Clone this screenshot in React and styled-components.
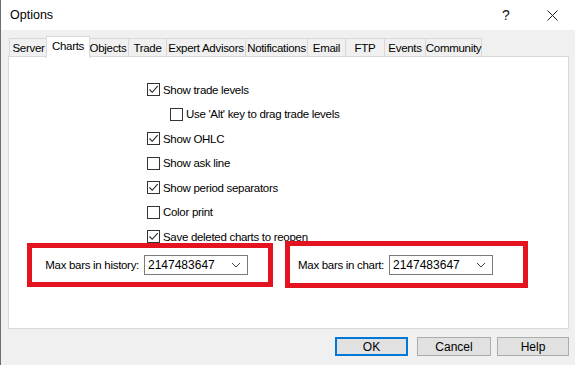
import React from 'react';
import styled, { createGlobalStyle } from 'styled-components';

const GlobalStyle = createGlobalStyle`
  html, body {
    margin: 0;
    padding: 0;
    background: #f0f0f0;
  }
  body {
    font-family: "Liberation Sans", Arial, sans-serif;
    font-size: 11.5px;
    letter-spacing: -0.3px;
    color: #000;
  }
`;

const Window = styled.div`
  width: 575px;
  height: 365px;
  box-sizing: border-box;
  border-left: 1px solid #6e6e6e;
  background: #f0f0f0;
  display: flex;
  flex-direction: column;
  overflow: hidden;
`;

const TitleBar = styled.div`
  height: 30px;
  background: #fff;
  display: flex;
  align-items: center;
  padding-left: 9px;
  font-size: 12.5px;
  letter-spacing: 0;
`;

const Title = styled.div`
  flex: 1;
`;

const TitleButton = styled.div`
  width: 46px;
  height: 30px;
  display: flex;
  align-items: center;
  justify-content: center;
  font-size: 14px;
  color: #111;
`;

const Body = styled.div`
  padding: 6px 6px 0 7px;
  display: flex;
  flex-direction: column;
`;

const TabRow = styled.div`
  display: flex;
  align-items: flex-end;
  height: 21px;
  padding-left: 2px;
  position: relative;
  z-index: 1;
`;

const Tab = styled.div`
  box-sizing: border-box;
  width: ${p => p.$w}px;
  height: ${p => (p.$active ? 22 : 19)}px;
  margin-bottom: ${p => (p.$active ? '-1px' : '0')};
  margin-right: ${p => (p.$active ? '-2px' : '0')};
  margin-left: ${p => (p.$active ? '-2px' : '-1px')};
  background: ${p => (p.$active ? '#fff' : '#f0f0f0')};
  border: 1px solid #d9d9d9;
  border-bottom: ${p => (p.$active ? 'none' : '1px solid #d9d9d9')};
  display: flex;
  justify-content: center;
  align-items: ${p => (p.$active ? 'flex-start' : 'center')};
  padding-top: ${p => (p.$active ? '3px' : '0')};
  white-space: nowrap;
  position: relative;
  z-index: ${p => (p.$active ? 2 : 1)};
`;

const Panel = styled.div`
  height: 273px;
  box-sizing: border-box;
  background: #fff;
  border: 1px solid #d9d9d9;
  margin-top: -1px;
  display: flex;
  flex-direction: column;
`;

const CheckList = styled.div`
  display: flex;
  flex-direction: column;
  padding: 26px 0 0 138px;
  gap: 11.5px;
`;

const CheckRow = styled.label`
  display: flex;
  align-items: center;
  gap: 3px;
  height: 13px;
  padding-left: ${p => (p.$indent ? 23 : 0)}px;
  white-space: nowrap;
`;

const Box = styled.span`
  width: 13px;
  height: 13px;
  flex-shrink: 0;
  box-sizing: border-box;
  border: 1px solid #333;
  background: #fff;
  display: flex;
  align-items: center;
  justify-content: center;
`;

const FieldRow = styled.div`
  display: flex;
  margin-top: 0;
  padding-left: 18px;
  gap: 12px;
`;

const Highlight = styled.div`
  width: ${p => p.$w}px;
  height: ${p => p.$h}px;
  box-sizing: border-box;
  border: 5px solid #e3141f;
  margin-top: ${p => p.$top}px;
  display: flex;
  align-items: center;
  justify-content: flex-end;
  padding-right: ${p => p.$pr}px;
  gap: 5px;
  white-space: nowrap;
`;

const Combo = styled.div`
  width: 104px;
  height: 20px;
  flex-shrink: 0;
  box-sizing: border-box;
  border: 1px solid #7a7a7a;
  background: #fff;
  display: flex;
  align-items: center;
  justify-content: space-between;
  padding: 0 6px 0 3px;
  font-size: 12px;
  letter-spacing: 0;
`;

const Buttons = styled.div`
  display: flex;
  justify-content: flex-end;
  padding: 8px 0 0 0;
`;

const Button = styled.div`
  width: ${p => p.$w}px;
  height: 19px;
  margin-right: ${p => p.$mr || 0}px;
  box-sizing: border-box;
  background: #e1e1e1;
  border: ${p => (p.$default ? '2px solid #0078d7' : '1px solid #adadad')};
  display: flex;
  align-items: center;
  justify-content: center;
  font-size: 12px;
  letter-spacing: 0;
`;

const Check = () => (
  <svg width="11" height="11" viewBox="0 0 11 11">
    <path d="M1.5 5.5 L4.2 8.3 L9.7 2.2" fill="none" stroke="#222" strokeWidth="1.1" />
  </svg>
);

const Chevron = () => (
  <svg width="10" height="6" viewBox="0 0 10 6">
    <path d="M1 1 L5 5 L9 1" fill="none" stroke="#444" strokeWidth="1" />
  </svg>
);

const tabs = [
  ['Server', 39],
  ['Charts', 44, true],
  ['Objects', 42],
  ['Trade', 39],
  ['Expert Advisors', 80],
  ['Notifications', 63],
  ['Email', 39],
  ['FTP', 40],
  ['Events', 42],
  ['Community', 57],
];

const options = [
  ['Show trade levels', true],
  ["Use 'Alt' key to drag trade levels", false, true],
  ['Show OHLC', true],
  ['Show ask line', false],
  ['Show period separators', true],
  ['Color print', false],
  ['Save deleted charts to reopen', true],
];

export default function App() {
  return (
    <>
      <GlobalStyle />
      <Window>
        <TitleBar>
          <Title>Options</Title>
          <TitleButton>?</TitleButton>
          <TitleButton>
            <svg width="11" height="11" viewBox="0 0 11 11">
              <path d="M0.5 0.5 L10.5 10.5 M10.5 0.5 L0.5 10.5" stroke="#222" strokeWidth="1" />
            </svg>
          </TitleButton>
        </TitleBar>
        <Body>
          <TabRow>
            {tabs.map(([name, w, active]) => (
              <Tab key={name} $w={w} $active={active}>{name}</Tab>
            ))}
          </TabRow>
          <Panel>
            <CheckList>
              {options.map(([text, checked, indent]) => (
                <CheckRow key={text} $indent={indent}>
                  <Box>{checked && <Check />}</Box>
                  {text}
                </CheckRow>
              ))}
            </CheckList>
            <FieldRow>
              <Highlight $w={246} $h={44} $top={0} $pr={20}>
                Max bars in history:
                <Combo>2147483647<Chevron /></Combo>
              </Highlight>
              <Highlight $w={243} $h={47} $top={-2} $pr={30}>
                Max bars in chart:
                <Combo>2147483647<Chevron /></Combo>
              </Highlight>
            </FieldRow>
          </Panel>
          <Buttons>
            <Button $w={73} $mr={9} $default>OK</Button>
            <Button $w={74} $mr={6}>Cancel</Button>
            <Button $w={72}>Help</Button>
          </Buttons>
        </Body>
      </Window>
    </>
  );
}
